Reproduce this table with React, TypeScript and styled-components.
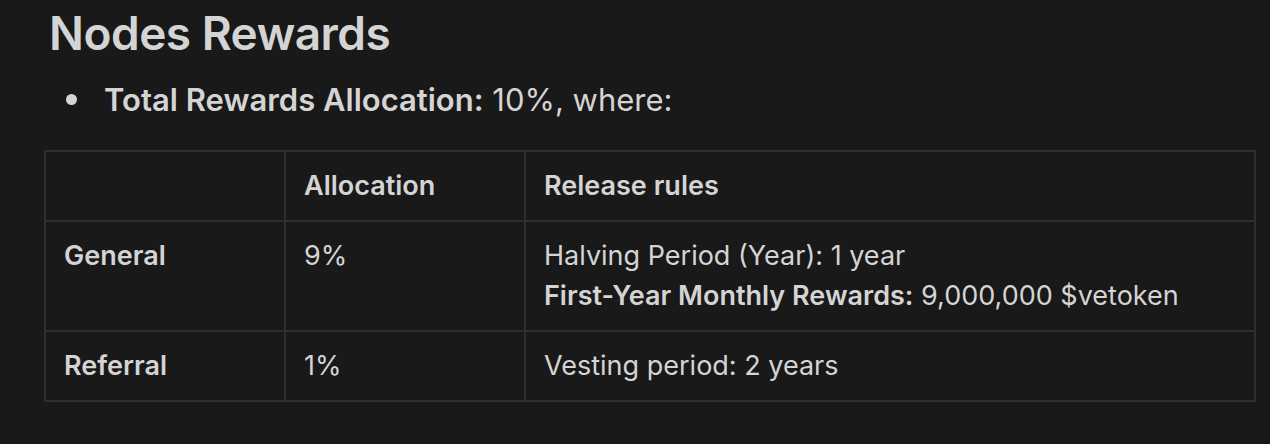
import React from "react";
import styled, { createGlobalStyle } from "styled-components";

const Global = createGlobalStyle`
  html, body { margin: 0; padding: 0; background: #191919; }
  body { font-family: Inter, "Noto Sans", sans-serif; color: #d4d4d4; }
`;

const Page = styled.div`
  width: 1270px;
  height: 444px;
  box-sizing: border-box;
  padding: 0 15px 0 44px;
  background: #191919;
  overflow: hidden;
`;

const Title = styled.h1`
  margin: 0;
  padding: 5px 0 0 5px;
  font-size: 46px;
  font-weight: 600;
  line-height: 56px;
  letter-spacing: -0.5px;
  color: #d4d4d4;
`;

const List = styled.ul`
  margin: 16px 0 0 0;
  padding: 0 0 0 60px;
  list-style: none;
`;

const Item = styled.li`
  position: relative;
  font-size: 31px;
  line-height: 46px;
  &::before {
    content: "";
    position: absolute;
    left: -38px;
    top: 17px;
    width: 11px;
    height: 11px;
    border-radius: 50%;
    background: #d4d4d4;
  }
`;

const Strong = styled.b`
  font-weight: 600;
`;

const Table = styled.table`
  margin-top: 27px;
  border-collapse: collapse;
  width: 1210px;
  table-layout: fixed;
  font-size: 27px;
  line-height: 40px;
`;

const Col = styled.col<{ $w: number }>`
  width: ${(p) => p.$w}px;
`;

const Cell = styled.td<{ $bold?: boolean }>`
  border: 2px solid #2f2f2f;
  padding: 14px 12px 14px 18px;
  vertical-align: top;
  white-space: nowrap;
  font-weight: ${(p) => (p.$bold ? 600 : 400)};
  color: #d4d4d4;
`;

export default function App() {
  return (
    <>
      <Global />
      <Page>
        <Title>Nodes Rewards</Title>
        <List>
          <Item>
            <Strong>Total Rewards Allocation:</Strong> 10%, where:
          </Item>
        </List>
        <Table>
          <colgroup>
            <Col $w={240} />
            <Col $w={240} />
            <Col $w={730} />
          </colgroup>
          <tbody>
            <tr>
              <Cell $bold />
              <Cell $bold>Allocation</Cell>
              <Cell $bold>Release rules</Cell>
            </tr>
            <tr>
              <Cell $bold>General</Cell>
              <Cell>9%</Cell>
              <Cell>
                Halving Period (Year): 1 year
                <br />
                <Strong>First-Year Monthly Rewards:</Strong> 9,000,000 $vetoken
              </Cell>
            </tr>
            <tr>
              <Cell $bold>Referral</Cell>
              <Cell>1%</Cell>
              <Cell>Vesting period: 2 years</Cell>
            </tr>
          </tbody>
        </Table>
      </Page>
    </>
  );
}
